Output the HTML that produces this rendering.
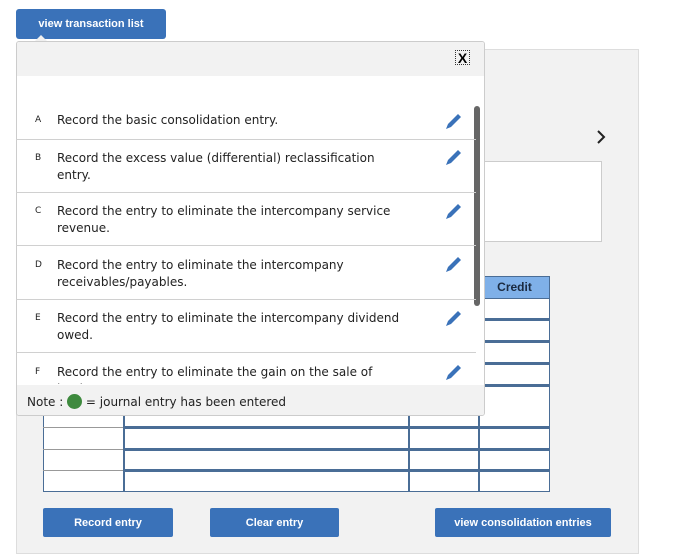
<!DOCTYPE html>
<html><head><style>
*{margin:0;padding:0;box-sizing:border-box}
body{width:687px;height:557px;background:#fff;position:relative;overflow:hidden;font-family:"DejaVu Sans","Liberation Sans",sans-serif}
.abs{position:absolute}
.btn{position:absolute;background:#3a72b9;color:#fff;font:bold 11px "Liberation Sans",sans-serif;text-align:center;border-radius:2px}
.hl{position:absolute;height:3px;background:#4a6d96}
.vl{position:absolute;width:2px;background:#4a6d96}
.row{position:absolute;left:16px;width:460px;border-bottom:1px solid #d0d0d0;font-size:12px;color:#222;line-height:17px}
.row .l{position:absolute;left:19px;font-size:9px;top:2px}
.row .t{position:absolute;left:41px;width:352px;top:2px}
</style></head><body>
<div class="abs" style="left:16px;top:49px;width:623px;height:505px;background:#f2f2f2;border:1px solid #ddd"></div>
<div class="abs" style="left:484px;top:161px;width:118px;height:81px;background:#fff;border:1px solid #ccc"></div>
<svg class="abs" style="left:596px;top:129px" width="12" height="16"><path d="M2 2l6 6-6 6" stroke="#222" stroke-width="2" fill="none"/></svg>
<div class="abs" style="left:43px;top:298px;width:507px;height:194px;background:#fff;border:1px solid #4a6d96"></div>
<div class="abs" style="left:479px;top:276px;width:71px;height:23px;background:#7fb0e8;border:1px solid #4a6d96;font:bold 12px 'Liberation Sans',sans-serif;text-align:center;line-height:21px;color:#1a2a40">Credit</div>
<div class="hl" style="left:479px;top:318px;width:71px"></div>
<div class="hl" style="left:479px;top:340px;width:71px"></div>
<div class="hl" style="left:479px;top:362px;width:71px"></div>
<div class="hl" style="left:479px;top:384px;width:71px"></div>
<div class="hl" style="left:124px;top:426px;width:426px"></div>
<div class="hl" style="left:124px;top:448px;width:426px"></div>
<div class="hl" style="left:124px;top:469px;width:426px"></div>
<div class="abs" style="left:43px;top:449px;width:81px;height:1px;background:#999"></div>
<div class="abs" style="left:43px;top:470px;width:81px;height:1px;background:#999"></div>
<div class="abs" style="left:43px;top:427px;width:81px;height:1px;background:#999"></div>
<div class="vl" style="left:123px;top:405px;height:87px"></div>
<div class="vl" style="left:408px;top:405px;height:87px"></div>
<div class="vl" style="left:478px;top:298px;height:194px"></div>
<div class="btn" style="left:43px;top:508px;width:130px;height:29px;line-height:31px">Record entry</div>
<div class="btn" style="left:210px;top:508px;width:129px;height:29px;line-height:31px">Clear entry</div>
<div class="btn" style="left:435px;top:508px;width:176px;height:29px;line-height:31px">view consolidation entries</div>
<div class="btn" style="left:16px;top:9px;width:150px;height:30px;line-height:31px;border-radius:3px">view transaction list</div>
<div class="abs" style="left:35px;top:35px;width:0;height:0;border-left:6px solid transparent;border-right:6px solid transparent;border-bottom:6px solid #f0f0f0"></div>
<div class="abs" style="left:16px;top:41px;width:469px;height:375px;background:#fff;border:1px solid #ccc;border-radius:3px;overflow:hidden">
<div class="abs" style="left:0;top:0;width:469px;height:34px;background:#f2f2f2"></div>
<div class="abs" style="left:438px;top:8px;width:15px;height:15px;border:1px dotted #333;font:bold 14px 'Liberation Sans',sans-serif;text-align:center;line-height:14px">X</div>
<div class="abs" style="left:0;top:343px;width:469px;height:33px;background:#f2f2f2;font-size:12px;color:#222;line-height:34px;padding-left:10px">Note : <span style="display:inline-block;width:15px;height:15px;border-radius:50%;background:#3e8a3e;vertical-align:-3px"></span> = journal entry has been entered</div>
<div class="abs" style="left:457px;top:64px;width:6px;height:200px;background:#666;border-radius:3px"></div>
</div>
<div class="row" style="top:110px;height:30px"><span class="l">A</span><span class="t">Record the basic consolidation entry.</span></div>
<div class="row" style="top:148px;height:45px"><span class="l">B</span><span class="t">Record the excess value (differential) reclassification entry.</span></div>
<div class="row" style="top:201px;height:45px"><span class="l">C</span><span class="t">Record the entry to eliminate the intercompany service revenue.</span></div>
<div class="row" style="top:255px;height:45px"><span class="l">D</span><span class="t">Record the entry to eliminate the intercompany receivables/payables.</span></div>
<div class="row" style="top:308px;height:45px"><span class="l">E</span><span class="t">Record the entry to eliminate the intercompany dividend owed.</span></div>
<div class="row" style="top:362px;height:22px;border:none;overflow:hidden"><span class="l">F</span><span class="t" style="width:330px">Record the entry to eliminate the gain on the sale of land.</span></div>
<svg class="abs" style="left:0;top:0" width="687" height="557">
<g fill="#3a72b9">
<path d="M446 129l2-5 10-10 3 3-10 10z"/>
<path d="M446 165l2-5 10-10 3 3-10 10z"/>
<path d="M446 219l2-5 10-10 3 3-10 10z"/>
<path d="M446 272l2-5 10-10 3 3-10 10z"/>
<path d="M446 326l2-5 10-10 3 3-10 10z"/>
<path d="M446 380l2-5 10-10 3 3-10 10z"/>
</g></svg>
</body></html>
